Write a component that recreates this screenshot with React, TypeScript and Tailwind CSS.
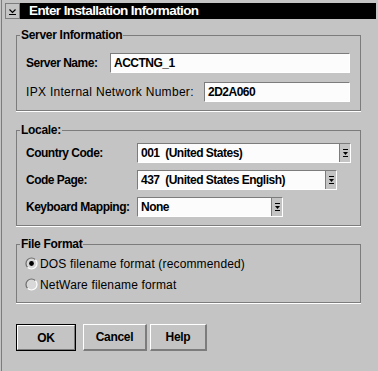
const sans = "font-['Liberation_Sans',Arial,sans-serif]";

function Field({ value, className = "" }: { value: string; className?: string }) {
  return (
    <div
      className={`h-5 flex items-center pl-[3px] bg-[#fcfcfc] border border-t-[#7c7c7c] border-l-[#7c7c7c] border-b-white border-r-white text-[12px] font-bold tracking-[-0.5px] text-black whitespace-nowrap ${className}`}
    >
      {value}
    </div>
  );
}

function ArrowGlyph() {
  return (
    <svg width="7" height="10" viewBox="0 0 7 10" className="block">
      <rect x="1" y="1" width="5" height="1" fill="#000" />
      <path d="M1 4h5L3.5 7z" fill="#000" />
      <rect x="1" y="8" width="5" height="1" fill="#000" />
    </svg>
  );
}

function Select({ value, className = "" }: { value: string; className?: string }) {
  return (
    <div
      className={`h-5 flex border border-t-[#7c7c7c] border-l-[#7c7c7c] border-b-white border-r-white ${className}`}
    >
      <div className="flex-1 flex items-center pl-[3px] bg-[#fcfcfc] text-[12px] font-bold tracking-[-0.5px] text-black whitespace-pre">
        {value}
      </div>
      <div className="w-[11px] flex items-center justify-center bg-[#c4c4c4] border-l border-[#7c7c7c]">
        <ArrowGlyph />
      </div>
    </div>
  );
}

function Radio({ checked, label }: { checked?: boolean; label: string }) {
  return (
    <div className="flex items-center gap-[2px] h-[13px]">
      <svg width="13" height="13" viewBox="0 0 13 13" className="block">
        <circle cx="6.5" cy="6.5" r="5.5" fill="#d8d8d8" />
        <path d="M2.6 10.4A5.5 5.5 0 0 1 10.4 2.6" stroke="#6c6c6c" strokeWidth="1.2" fill="none" />
        <path d="M10.4 2.6A5.5 5.5 0 0 1 2.6 10.4" stroke="#ffffff" strokeWidth="1.2" fill="none" />
        {checked && <circle cx="6.5" cy="6.5" r="2.4" fill="#000" />}
      </svg>
      <span className="text-[12px] tracking-[0.15px] text-black whitespace-nowrap">{label}</span>
    </div>
  );
}

function Group({ title, className = "", children }: { title: string; className?: string; children: React.ReactNode }) {
  return (
    <div className={`relative ml-[14px] w-[345px] border border-[#7c7c7c] shadow-[0_1px_0_#ffffff] ${className}`}>
      <span className="absolute left-[3px] top-[-8px] px-[1px] bg-[#c4c4c4] text-[12px] leading-[14px] font-bold tracking-[-0.3px] text-black whitespace-nowrap">
        {title}
      </span>
      {children}
    </div>
  );
}

function Button({ label, def, className = "" }: { label: string; def?: boolean; className?: string }) {
  return (
    <div
      className={`h-[27px] flex items-center justify-center text-[12px] font-bold tracking-[-0.3px] text-black ${
        def
          ? "border border-black"
          : "border-t border-l border-t-white border-l-white border-b-2 border-r-2 border-b-[#7c7c7c] border-r-[#7c7c7c]"
      } ${className}`}
    >
      {def ? (
        <div className="w-full h-full flex items-center justify-center border-t border-l border-t-white border-l-white border-b border-r border-b-[#7c7c7c] border-r-[#7c7c7c]">
          {label}
        </div>
      ) : (
        label
      )}
    </div>
  );
}

const label = "text-[12px] font-bold tracking-[-0.5px] text-black whitespace-nowrap";

export default function App() {
  return (
    <div className={`w-[378px] h-[371px] overflow-hidden bg-[#c4c4c4] pl-px ${sans}`}>
      <div className="h-full border-l border-[#7c7c7c] pt-[3px]">
        {/* title bar */}
        <div className="flex h-4 ml-[3px] mr-[2px]">
          <div className="w-[15px] h-4 flex items-center justify-center border border-[#7c7c7c] bg-[#c4c4c4]">
            <svg width="9" height="9" viewBox="0 0 9 9" className="block">
              <path d="M1.5 2.5l3 3 3-3" stroke="#000" strokeWidth="1.2" fill="none" />
              <rect x="1" y="7" width="7" height="1" fill="#000" />
            </svg>
          </div>
          <div className="flex-1 bg-black flex items-center pl-[9px] text-white text-[13.5px] font-bold tracking-[-0.6px] whitespace-nowrap">
            Enter Installation Information
          </div>
        </div>

        <Group title="Server Information" className="mt-[16px] pt-[17px] pb-[8px] pl-[9px] pr-[10px]">
          <div className="flex items-center justify-between">
            <span className={label}>Server Name:</span>
            <Field value="ACCTNG_1" className="w-[240px]" />
          </div>
          <div className="flex items-center justify-between mt-[9px]">
            <span className="text-[12px] text-black tracking-[0.3px] whitespace-nowrap">IPX Internal Network Number:</span>
            <Field value="2D2A060" className="w-[146px]" />
          </div>
        </Group>

        <Group title="Locale:" className="mt-[19px] pt-[12px] pb-[8px] pl-[9px]">
          <div className="grid grid-cols-[111px_auto] items-center gap-y-[7px]">
            <span className={label}>Country Code:</span>
            <Select value="001  (United States)" className="w-[214px]" />
            <span className={label}>Code Page:</span>
            <Select value="437  (United States English)" className="w-[200px]" />
            <span className={label}>Keyboard Mapping:</span>
            <Select value="None" className="w-[146px]" />
          </div>
        </Group>

        <Group title="File Format" className="mt-[18px] pt-[12px] pb-[11px] pl-[8px]">
          <div className="flex flex-col gap-[8px]">
            <Radio checked label="DOS filename format (recommended)" />
            <Radio label="NetWare filename format" />
          </div>
        </Group>

        <div className="flex ml-[14px] mt-[21px]">
          <Button label="OK" def className="w-[60px]" />
          <Button label="Cancel" className="w-[64px] ml-[7px]" />
          <Button label="Help" className="w-[57px] ml-[3px]" />
        </div>
      </div>
    </div>
  );
}
